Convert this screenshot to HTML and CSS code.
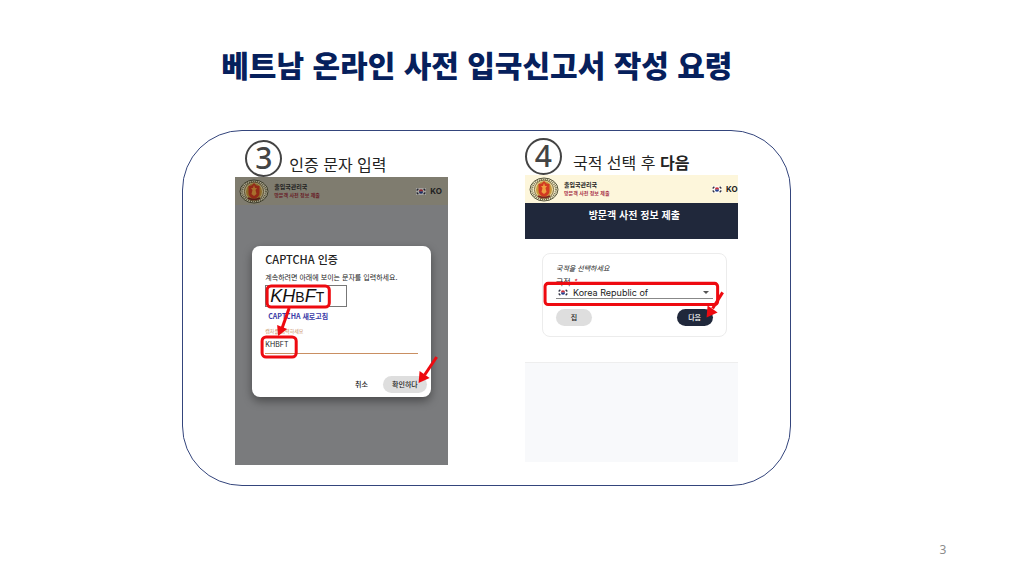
FILE: index.html
```html
<!DOCTYPE html>
<html lang="ko">

<head>
    <meta charset="UTF-8">
    <meta name="viewport" content="width=device-width, initial-scale=1.0">
    <title>베트남 온라인 사전 입국신고서 작성 요령</title>
    <link rel="stylesheet" href="styles.css">
</head>

<body>

    <!-- shared drawings -->
    <svg class="defs" aria-hidden="true">
        <symbol id="emblem" viewBox="0 0 30 25" preserveAspectRatio="none">
            <ellipse cx="15" cy="12.5" rx="14" ry="11.5" fill="#f3ebc8" stroke="#55543c" stroke-width="1"/>
            <ellipse cx="15" cy="12.5" rx="12" ry="9.8" fill="none" stroke="#6d6a4c" stroke-width="2" stroke-dasharray="1 1"/>
            <ellipse cx="15" cy="12.5" rx="9.6" ry="9.4" fill="#e8d9a0" stroke="#6b552a" stroke-width=".8"/>
            <ellipse cx="15" cy="12.5" rx="8" ry="8.200" fill="#c99a3c"/>
            <path d="M9.500 7l3-.5L15 4l2.500 2.500 3 .5v7q0 4-5.500 6q-5.500-2-5.500-6z" fill="#d23a22"/>
            <path d="M15 6l1 3h2l-1.5 2 1 4-2.500 2-2.500-2 1-4L12 9h2z" fill="#f0a040"/>
            <path d="M9 19q6 3 12 0" fill="none" stroke="#7d2620" stroke-width="1.500"/>
        </symbol>
        <symbol id="flag" viewBox="0 0 12 8" preserveAspectRatio="none">
            <rect width="12" height="8" fill="#fff" fill-opacity=".7"/>
            <path d="M3.500 4a2.500 2.500 0 0 1 5 0z" fill="#cd2e3a"/>
            <path d="M3.500 4a2.500 2.500 0 0 0 5 0z" fill="#243f8f"/>
            <path d="M.8 2.800L2.800.8M.8 5.200L2.800 7.200M9.200.8L11.200 2.800M9.200 7.200L11.200 5.200" stroke="#334" stroke-width="1.600"/>
        </symbol>
    </svg>

    <main class="slide">
        <h1>베트남 온라인 사전 입국신고서 작성 요령</h1>

        <div class="frame">
            <section class="step">
                <h2 class="stepTitle"><span class="num">3</span><span class="label">인증 문자 입력</span></h2>
                <div class="phone dim">
                    <div class="bar">
                        <svg class="emblem"><use href="#emblem"/></svg>
                        <div class="org">
                            <strong>출입국관리국</strong>
                            <span>방문객 사전 정보 제출</span>
                        </div>
                        <svg class="flag"><use href="#flag"/></svg>
                        <b class="lang">KO</b>
                    </div>

                    <form class="modal">
                        <h3>CAPTCHA 인증</h3>
                        <p>계속하려면 아래에 보이는 문자를 입력하세요.</p>
                        <div class="captcha"><i>KH</i><span>B</span><i>F</i><span>T</span></div>
                        <a class="refresh" href="#">CAPTCHA 새로고침</a>
                        <label for="code">캡차를 입력하세요</label>
                        <input id="code" type="text" value="KHBFT">
                        <div class="actions">
                            <button type="button" class="plain">취소</button>
                            <button type="button" class="pill">확인하다</button>
                        </div>
                    </form>

                    <svg class="marks" viewBox="0 0 212 288" preserveAspectRatio="none">
                        <rect x="32" y="109" width="62" height="21" rx="4"/>
                        <rect x="27" y="160" width="34" height="20" rx="4"/>
                        <path class="line" d="M54 131L47 151"/>
                        <path class="head" d="M43 159L42 148L52 152z"/>
                        <path class="line" d="M201 180L189 198"/>
                        <path class="head" d="M183 206L184 194L194 201z"/>
                    </svg>
                </div>
            </section>

            <section class="step second">
                <h2 class="stepTitle"><span class="num">4</span><span class="label">국적 선택 후 <b>다음</b></span></h2>
                <div class="phone">
                    <div class="bar">
                        <svg class="emblem"><use href="#emblem"/></svg>
                        <div class="org">
                            <strong>출입국관리국</strong>
                            <span>방문객 사전 정보 제출</span>
                        </div>
                        <svg class="flag"><use href="#flag"/></svg>
                        <b class="lang">KO</b>
                    </div>
                    <h3 class="banner">방문객 사전 정보 제출</h3>

                    <form class="card">
                        <p>국적을 선택하세요</p>
                        <label for="nation">국적 <em>*</em></label>
                        <div class="nation">
                            <svg class="flag"><use href="#flag"/></svg>
                            <select id="nation">
                                <option>Korea Republic of</option>
                            </select>
                            <i class="caret"></i>
                        </div>
                        <div class="actions">
                            <button type="button" class="pill">집</button>
                            <button type="button" class="pill dark">다음</button>
                        </div>
                    </form>
                    <div class="rest"></div>

                    <svg class="marks" viewBox="0 0 212 287" preserveAspectRatio="none">
                        <rect x="20" y="108" width="172" height="21" rx="3"/>
                        <path class="line" d="M197 117L187 133"/>
                        <path class="head" d="M181 142L182 130L192 137z"/>
                    </svg>
                </div>
            </section>
        </div>

        <footer>3</footer>
    </main>

</body>

</html>
```

FILE: styles.css
```css
* {
    box-sizing: border-box;
}

body {
    margin: 0;
    background-color: #fff;
    color: #222;
    font-family: "Noto Sans CJK KR", sans-serif;
}

h1, h2, h3, p {
    margin: 0;
}

.defs {
    position: absolute;
    width: 0;
    height: 0;
}

.slide {
    display: flex;
    flex-direction: column;
    min-height: 100vh;
    padding: 40px 7% 16px 17.8%;
}

h1 {
    padding-left: 39px;
    font-size: 30px;
    line-height: 48px;
    font-weight: 900;
    white-space: nowrap;
    color: #06205c;
}

.frame {
    display: grid;
    grid-template-columns: 1fr 1fr;
    gap: 77px;
    margin-top: 42px;
    margin-right: 21%;
    padding: 8px 52px 20px;
    border: 1px solid #34457c;
    border-radius: 60px;
}

/* step headings */
.stepTitle {
    display: flex;
    align-items: flex-end;
    gap: 7px;
    height: 38px;
    padding-left: 10px;
    font-size: 16px;
    line-height: 26px;
    font-weight: 400;
    white-space: nowrap;
}

.num {
    width: 37px;
    height: 37px;
    border: 2px solid #444;
    border-radius: 50%;
    font-family: "Noto Sans", sans-serif;
    font-size: 30px;
    line-height: 32px;
    font-weight: 500;
    text-align: center;
    color: #444;
}

.second .stepTitle {
    gap: 11px;
    height: 36px;
    padding-left: 0;
}

/* phone screens */
.phone {
    position: relative;
    height: 288px;
    font-size: 7px;
    line-height: 10px;
}

.dim {
    background-color: #7a7b7d;
}

.bar {
    display: flex;
    align-items: center;
    height: 28px;
    padding: 0 6px 0 4px;
    background-color: #fdf6db;
}

.dim .bar {
    background-color: #7f7c6f;
}

.dim .emblem, .dim .flag {
    filter: brightness(0.7);
}

.second .bar {
    padding-right: 0;
}

.emblem {
    width: 30px;
    height: 25px;
    margin-right: 5px;
}

.org {
    display: flex;
    flex-direction: column;
    margin-right: auto;
    font-size: 5px;
    line-height: 8px;
    white-space: nowrap;
}

.org strong {
    font-size: 6px;
}

.org span {
    font-weight: 700;
    color: #a8324a;
}

.dim .org span {
    color: #681c28;
}

.flag {
    width: 10px;
    height: 7px;
}

.lang {
    margin-left: 4px;
    font-family: Inter, sans-serif;
    font-size: 8px;
}

.modal {
    display: flex;
    flex-direction: column;
    align-items: flex-start;
    margin: 41px 17px 0;
    padding: 5px 13px 4px;
    border-radius: 8px;
    background-color: #fff;
    box-shadow: 0 4px 10px rgba(0, 0, 0, 0.4);
}

.modal h3 {
    font-size: 11px;
    line-height: 16px;
    font-weight: 500;
}

.modal p {
    margin: 5px 0 3px;
    white-space: nowrap;
}

.captcha {
    width: 82px;
    height: 22px;
    padding-left: 4px;
    border: 1px solid #777;
    font-family: "Liberation Sans", sans-serif;
    font-size: 14px;
    line-height: 20px;
    color: #111;
}

.captcha i {
    font-size: 18px;
}

.refresh {
    margin: 4px 0 6px 3px;
    font-weight: 700;
    text-decoration: none;
    color: #3a3aa6;
}

.modal label {
    font-size: 5px;
    line-height: 8px;
    color: #c98f62;
}

.modal input {
    width: 100%;
    height: 19px;
    padding: 0;
    border: 0;
    border-bottom: 1px solid #c98f62;
    font-family: Inter, sans-serif;
    font-size: 7px;
    color: #222;
}

.actions {
    display: flex;
    justify-content: space-between;
}

.modal .actions {
    align-self: flex-end;
    gap: 15px;
    margin: 22px -9px 0 0;
}

button {
    height: 17px;
    padding: 0;
    border: 0;
    background: none;
    font-family: inherit;
    font-size: 7px;
    line-height: 17px;
    font-weight: 500;
    color: #222;
}

.pill {
    width: 36px;
    border-radius: 9px;
    background-color: #dedede;
}

.modal .pill {
    width: 44px;
}

.dark {
    background-color: #20283b;
    color: #fff;
}

.banner {
    height: 36px;
    padding-left: 6px;
    font-size: 10px;
    line-height: 24px;
    font-weight: 700;
    text-align: center;
    background-color: #20283b;
    color: #fff;
}

.card {
    margin: 14px 11px 25px 17px;
    padding: 9px 13px 10px;
    border: 1px solid #ececec;
    border-radius: 8px;
}

.card p {
    font-style: italic;
}

.card label {
    display: block;
    margin-top: 4px;
    font-size: 8px;
}

.card em {
    color: #d02030;
}

.nation {
    display: flex;
    align-items: center;
    height: 12px;
    padding: 0 4px 0 2px;
    border-bottom: 1px solid #888;
}

.nation select {
    flex: 1;
    min-width: 0;
    height: 12px;
    margin-left: 5px;
    padding: 0;
    border: 0;
    background: none;
    appearance: none;
    font-family: Inter, sans-serif;
    font-size: 9px;
    line-height: 12px;
    color: #222;
}

.caret {
    border: 3px solid transparent;
    border-top-color: #555;
    border-bottom: 0;
}

.card .actions {
    margin-top: 10px;
}

.rest {
    height: 100px;
    border-top: 1px solid #eee;
    background-color: #f8f9fb;
}

/* red guide marks on top of the screens */
.marks {
    position: absolute;
    top: 0;
    left: 0;
    width: 100%;
    height: 100%;
    pointer-events: none;
    fill: none;
    stroke: #ee0a10;
    stroke-width: 3;
}

.marks .head {
    fill: #ee0a10;
    stroke: none;
}

footer {
    margin-top: auto;
    padding-right: 6px;
    font-family: "Noto Sans", sans-serif;
    font-size: 12px;
    line-height: 20px;
    text-align: right;
    color: #8c8c8c;
}
```
